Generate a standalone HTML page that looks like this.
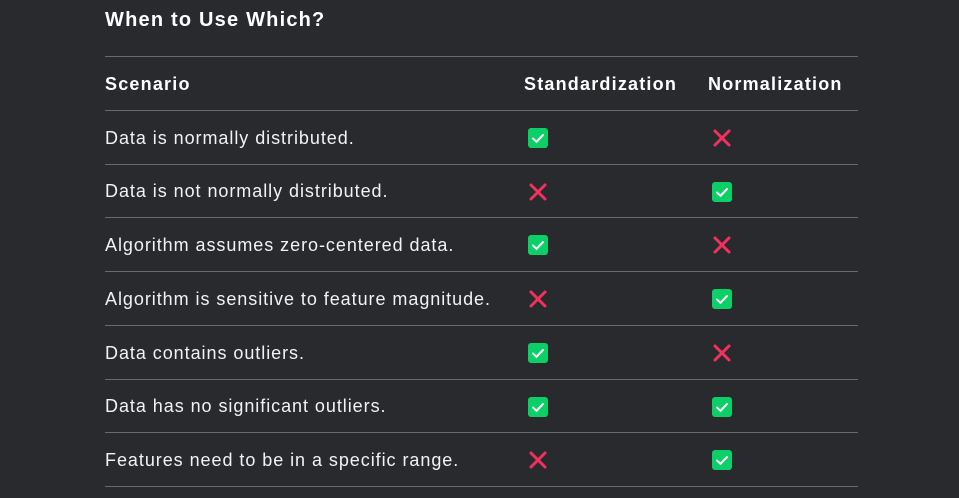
<!DOCTYPE html>
<html><head><style>
body{margin:0;background:#292a2e;width:959px;height:498px;overflow:hidden;font-family:"Liberation Sans",sans-serif;color:#f2f2f2}
h2{position:absolute;left:105px;top:9px;margin:0;font-size:20px;font-weight:bold;color:#fff;letter-spacing:1.2px}
table{position:absolute;left:105px;top:56px;width:753px;border-collapse:collapse;font-size:18px;letter-spacing:0.95px}
td,th{height:52.75px;border-top:1px solid #6a6a6d;padding:0;text-align:left;vertical-align:middle}
td span.t,th span.t{position:relative;top:1px}
tr:last-child td{border-bottom:1px solid #6a6a6d}
th{font-weight:bold;color:#fff;letter-spacing:1.2px}
.c1{width:419px}.c2{width:184px}
.ok{display:inline-block;width:20px;height:20px;background:#0ccf68;border-radius:3px;vertical-align:middle;margin-left:4px}
.no{display:inline-block;width:20px;height:20px;vertical-align:middle;margin-left:4px}
</style></head><body>
<h2>When to Use Which?</h2>
<table>
<tr><th class="c1"><span class="t">Scenario</span></th><th class="c2"><span class="t">Standardization</span></th><th><span class="t">Normalization</span></th></tr>
<tr><td><span class="t">Data is normally distributed.</span></td><td><span class="ok"><svg width="20" height="20"><path d="M5 10.5l3.5 3.3L15 7" stroke="#fff" stroke-width="2" fill="none" stroke-linecap="round"/></svg></span></td><td><span class="no"><svg width="20" height="20"><path d="M3 3L17 17M17 3L3 17" stroke="#f4305e" stroke-width="3" stroke-linecap="round"/></svg></span></td></tr>
<tr><td><span class="t">Data is not normally distributed.</span></td><td><span class="no"><svg width="20" height="20"><path d="M3 3L17 17M17 3L3 17" stroke="#f4305e" stroke-width="3" stroke-linecap="round"/></svg></span></td><td><span class="ok"><svg width="20" height="20"><path d="M5 10.5l3.5 3.3L15 7" stroke="#fff" stroke-width="2" fill="none" stroke-linecap="round"/></svg></span></td></tr>
<tr><td><span class="t">Algorithm assumes zero-centered data.</span></td><td><span class="ok"><svg width="20" height="20"><path d="M5 10.5l3.5 3.3L15 7" stroke="#fff" stroke-width="2" fill="none" stroke-linecap="round"/></svg></span></td><td><span class="no"><svg width="20" height="20"><path d="M3 3L17 17M17 3L3 17" stroke="#f4305e" stroke-width="3" stroke-linecap="round"/></svg></span></td></tr>
<tr><td><span class="t">Algorithm is sensitive to feature magnitude.</span></td><td><span class="no"><svg width="20" height="20"><path d="M3 3L17 17M17 3L3 17" stroke="#f4305e" stroke-width="3" stroke-linecap="round"/></svg></span></td><td><span class="ok"><svg width="20" height="20"><path d="M5 10.5l3.5 3.3L15 7" stroke="#fff" stroke-width="2" fill="none" stroke-linecap="round"/></svg></span></td></tr>
<tr><td><span class="t">Data contains outliers.</span></td><td><span class="ok"><svg width="20" height="20"><path d="M5 10.5l3.5 3.3L15 7" stroke="#fff" stroke-width="2" fill="none" stroke-linecap="round"/></svg></span></td><td><span class="no"><svg width="20" height="20"><path d="M3 3L17 17M17 3L3 17" stroke="#f4305e" stroke-width="3" stroke-linecap="round"/></svg></span></td></tr>
<tr><td><span class="t">Data has no significant outliers.</span></td><td><span class="ok"><svg width="20" height="20"><path d="M5 10.5l3.5 3.3L15 7" stroke="#fff" stroke-width="2" fill="none" stroke-linecap="round"/></svg></span></td><td><span class="ok"><svg width="20" height="20"><path d="M5 10.5l3.5 3.3L15 7" stroke="#fff" stroke-width="2" fill="none" stroke-linecap="round"/></svg></span></td></tr>
<tr><td><span class="t">Features need to be in a specific range.</span></td><td><span class="no"><svg width="20" height="20"><path d="M3 3L17 17M17 3L3 17" stroke="#f4305e" stroke-width="3" stroke-linecap="round"/></svg></span></td><td><span class="ok"><svg width="20" height="20"><path d="M5 10.5l3.5 3.3L15 7" stroke="#fff" stroke-width="2" fill="none" stroke-linecap="round"/></svg></span></td></tr>
</table>
</body></html>
